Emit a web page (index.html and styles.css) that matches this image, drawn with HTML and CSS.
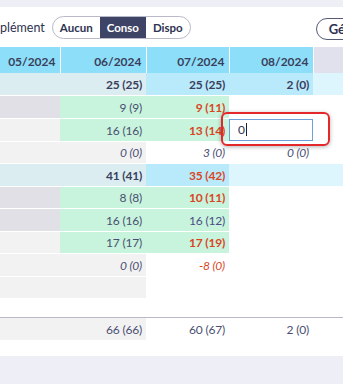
FILE: index.html
```html
<!DOCTYPE html>
<html lang="fr">
<head>
  <meta charset="UTF-8" />
  <meta name="viewport" content="width=device-width, initial-scale=1.0" />
  <title>Prévisions</title>
  <link rel="stylesheet" href="styles.css">
</head>
<body>
  <div class="card">
    <div class="toolbar">
      <span class="label">plément</span>
      <div class="seg">
        <button>Aucun</button><button class="on">Conso</button><button>Dispo</button>
      </div>
      <button class="gen">Générer</button>
    </div>

    <table class="grid">
      <colgroup>
        <col class="c-a"><col class="c-b"><col class="c-c"><col class="c-d"><col>
      </colgroup>
      <thead>
        <tr>
          <th>05/2024</th>
          <th>06/2024</th>
          <th>07/2024</th>
          <th>08/2024</th>
          <th class="th-next"></th>
        </tr>
      </thead>
      <tbody>
        <tr class="sum">
          <td class="bg-sum"></td>
          <td class="bg-sum">25 (25)</td>
          <td class="bg-blue">25 (25)</td>
          <td class="bg-blue">2 (0)</td>
          <td class="bg-pale"></td>
        </tr>
        <tr>
          <td class="bg-grey"></td>
          <td class="bg-green">9 (9)</td>
          <td class="bg-green red strong">9 (11)</td>
          <td></td>
          <td></td>
        </tr>
        <tr>
          <td class="bg-light"></td>
          <td class="bg-green">16 (16)</td>
          <td class="bg-green red strong">13 (14)</td>
          <td class="edit">
            <div class="cell-input">0<span class="caret"></span></div>
            <div class="highlight"></div>
          </td>
          <td></td>
        </tr>
        <tr class="rest">
          <td class="bg-light"></td>
          <td class="bg-light">0 (0)</td>
          <td>3 (0)</td>
          <td>0 (0)</td>
          <td></td>
        </tr>
        <tr class="sum">
          <td class="bg-sum"></td>
          <td class="bg-sum">41 (41)</td>
          <td class="bg-blue red">35 (42)</td>
          <td class="bg-pale"></td>
          <td class="bg-pale"></td>
        </tr>
        <tr>
          <td class="bg-grey"></td>
          <td class="bg-green">8 (8)</td>
          <td class="bg-green red strong">10 (11)</td>
          <td></td>
          <td></td>
        </tr>
        <tr>
          <td class="bg-grey"></td>
          <td class="bg-green">16 (16)</td>
          <td class="bg-green under">16 (12)</td>
          <td></td>
          <td></td>
        </tr>
        <tr>
          <td class="bg-light"></td>
          <td class="bg-green">17 (17)</td>
          <td class="bg-green red strong">17 (19)</td>
          <td></td>
          <td></td>
        </tr>
        <tr class="rest">
          <td class="bg-light"></td>
          <td class="bg-light">0 (0)</td>
          <td class="red">-8 (0)</td>
          <td></td>
          <td></td>
        </tr>
        <tr>
          <td class="bg-light"></td>
          <td class="bg-light"></td>
          <td></td>
          <td></td>
          <td></td>
        </tr>
        <tr class="spacer">
          <td colspan="5"></td>
        </tr>
      </tbody>
      <tfoot>
        <tr>
          <td class="bg-light"></td>
          <td class="bg-light">66 (66)</td>
          <td>60 (67)</td>
          <td>2 (0)</td>
          <td></td>
        </tr>
      </tfoot>
    </table>
  </div>
</body>
</html>
```

FILE: styles.css
```css
html,
body {
  overflow: hidden;
}

body {
  margin: 0;
  background-color: #eeeef6;
  font-family: Lato, 'Liberation Sans', sans-serif;
  color: #50557a;
}

.card {
  background-color: #ffffff;
  margin-top: 7px;
  padding-bottom: 16px;
  width: 420px;
}

/* barre d'outils */
.toolbar {
  display: flex;
  align-items: center;
  gap: 7px;
  height: 40px;
}

.label {
  font-size: 12.5px;
  color: #2e3251;
}

.seg {
  display: flex;
  height: 23px;
  border: 1px solid #b9b9ca;
  border-radius: 12px;
  overflow: hidden;
  box-sizing: border-box;
}

.seg button {
  border: none;
  background: none;
  padding: 0 7px;
  font-family: inherit;
  font-size: 11.5px;
  font-weight: 700;
  color: #2e3251;
}

.seg button.on {
  background-color: #3e4465;
  color: #ffffff;
}

.gen {
  margin-left: 118px;
  margin-top: 3px;
  height: 22px;
  padding: 0 10px 0 12px;
  border: 1px solid #555a76;
  border-radius: 11px;
  background: #ffffff;
  font-family: inherit;
  font-size: 13px;
  font-weight: 700;
  color: #2e3251;
}

/* tableau */
.grid {
  border-collapse: collapse;
  table-layout: fixed;
  width: 420px;
  font-size: 12px;
}

.c-a { width: 60px; }
.c-b { width: 86px; }
.c-c { width: 83px; }
.c-d { width: 84px; }

.grid th {
  height: 24px;
  padding: 2px 4px 0;
  background-color: #8ddff9;
  color: #3b3f5d;
  font-weight: 700;
  font-size: 12px;
  text-align: right;
  border-left: 1px solid #ffffff;
}

.grid th:first-child {
  border-left: none;
}

.grid th.th-next {
  background-color: #e1e1ee;
}

.grid tbody tr {
  height: 22.5px;
}

.grid td {
  padding: 1px 4px 0;
  text-align: right;
  border-bottom: 1px solid #ffffff;
  white-space: nowrap;
  letter-spacing: -0.2px;
  color: #4a4f72;
}

.sum td {
  font-weight: 700;
}

.grid .sum td {
  color: #3b3f5d;
}

.rest td {
  font-style: italic;
}

.bg-sum { background-color: #dcedf2; }
.bg-blue { background-color: #b9eafb; }
.bg-pale { background-color: #ddf6fd; }
.bg-grey { background-color: #e0e0e6; }
.bg-light { background-color: #f2f2f2; }
.bg-green { background-color: #c8f3dc; }

.grid .sum td.red,
.grid td.red { color: #d9461f; }
.grid td.strong { font-weight: 700; }
.grid td.under { color: #4b4d88; }

.grid td.edit {
  position: relative;
  padding: 0;
}

.cell-input {
  height: 22px;
  box-sizing: border-box;
  border: 1px solid #6f9fd8;
  padding-left: 8px;
  text-align: left;
  line-height: 20px;
  font-size: 12px;
  color: #2e3251;
}

.caret {
  display: inline-block;
  width: 1px;
  height: 13px;
  margin-left: 1px;
  vertical-align: -2px;
  background-color: #1d1f30;
}

.highlight {
  position: absolute;
  left: -8px;
  top: -7px;
  right: -17px;
  bottom: -5px;
  border: 2px solid #e4272a;
  border-radius: 6px;
  box-shadow: 0 1px 4px rgba(0, 0, 0, 0.3);
  pointer-events: none;
}

.grid tr.spacer {
  height: 19px;
}

.grid tr.spacer td {
  border-bottom: 1px solid #b9b9c9;
}

.grid tfoot tr {
  height: 22px;
}

.grid tfoot td {
  border-bottom: none;
}
```
